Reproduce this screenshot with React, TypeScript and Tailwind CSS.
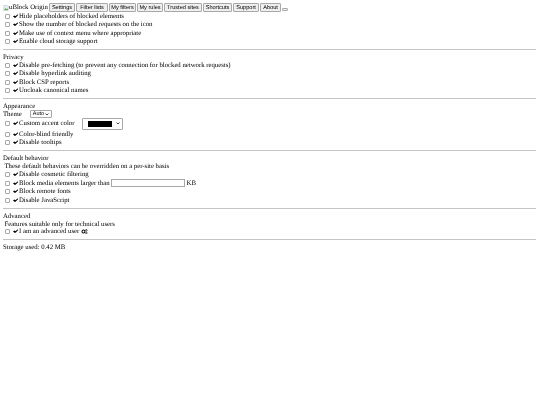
const tabs = [
  { label: "Settings", width: "w-[26px]" },
  { label: "Filter lists", width: "w-[32px]" },
  { label: "My filters", width: "w-[27px]" },
  { label: "My rules", width: "w-[26px]" },
  { label: "Trusted sites", width: "w-[38px]" },
  { label: "Shortcuts", width: "w-[29px]" },
  { label: "Support", width: "w-[26px]" },
  { label: "About", width: "w-[21px]" },
];

function Option({ label, children, className = "h-[8.5px]" }: { label: string; children?: React.ReactNode; className?: string }) {
  return (
    <div className={`flex items-center pl-[5px] ${className}`}>
      <span className="h-[5px] w-[5px] shrink-0 rounded-[1px] border-[0.5px] border-[#a8a8a8] bg-white" />
      <svg viewBox="0 0 12 8" className="mb-[1px] ml-[2.5px] mr-[1px] h-[4px] w-[5.5px] shrink-0">
        <path d="M0 4.5 L3.5 3 L5 4.5 L11 0 L12 1 L5.5 8 L3 8 Z" fill="#000" />
      </svg>
      <span className="whitespace-nowrap pt-[1px]">{label}</span>
      {children}
    </div>
  );
}

function Divider() {
  return <hr className="my-[3px] ml-[3px] mr-[4px] border-t border-[#c4c4c4]" />;
}

export default function App() {
  return (
    <div className="h-[405px] w-[540px] overflow-hidden bg-white pt-[3px] font-['Liberation_Serif',serif] text-[6.75px] leading-[8px] text-black blur-[0.25px] [text-rendering:geometricPrecision]">
      <div className="flex h-[9px] items-center pl-[3px]">
        <svg viewBox="0 0 16 16" className="h-[6px] w-[6px] shrink-0">
          <path d="M2 1h9l3 3v11H2z" fill="#e8eef7" stroke="#9aa0a6" />
          <path d="M3 13l4-5 3 3 2-2 2 4z" fill="#6aa84f" />
        </svg>
        <span className="w-[40px] whitespace-nowrap pt-[1px]">uBlock Origin</span>
        <div className="flex">
          {tabs.map((t) => (
            <span
              key={t.label}
              className={`mr-[1px] flex h-[8.5px] items-center justify-center whitespace-nowrap rounded-[1px] border-[0.5px] border-[#a8a8a8] bg-[#efefef] font-['Liberation_Sans',sans-serif] text-[5.6px] ${t.width}`}
            >
              {t.label}
            </span>
          ))}
          <span className="mt-[5px] h-[3px] w-[6px] rounded-[1px] border-[0.5px] border-[#a8a8a8] bg-[#efefef]" />
        </div>
      </div>

      <Option label="Hide placeholders of blocked elements" />
      <Option label="Show the number of blocked requests on the icon" />
      <Option label="Make use of context menu where appropriate" />
      <Option label="Enable cloud storage support" />
      <Divider />

      <div className="pl-[3px] pt-[1px] -mb-[1px]">Privacy</div>
      <Option label="Disable pre-fetching (to prevent any connection for blocked network requests)" />
      <Option label="Disable hyperlink auditing" />
      <Option label="Block CSP reports" />
      <Option label="Uncloak canonical names" />
      <Divider />

      <div className="pl-[3px] pt-[1px] -mb-[1px]">Appearance</div>
      <div className="flex h-[8px] items-center pl-[3px]">
        <span className="w-[27px] pt-[1px]">Theme</span>
        <span className="flex h-[7.5px] w-[22px] items-center justify-center rounded-[1px] border-[0.5px] border-[#a8a8a8] font-['Liberation_Sans',sans-serif] text-[5.5px]">
          Auto
          <svg viewBox="0 0 8 6" className="ml-[1px] h-[3px] w-[4px]">
            <path d="M1 1l3 3 3-3" fill="none" stroke="#111" strokeWidth="1.5" />
          </svg>
        </span>
      </div>
      <Option label="Custom accent color" className="h-[11.5px]">
        <span className="ml-[8px] flex h-[12px] w-[41px] items-center rounded-[1px] border-[0.5px] border-[#a8a8a8] pl-[4.5px]">
          <span className="h-[6px] w-[24px] bg-black" />
          <svg viewBox="0 0 8 6" className="ml-[4px] h-[3px] w-[4px]">
            <path d="M1 1l3 3 3-3" fill="none" stroke="#111" strokeWidth="1.5" />
          </svg>
        </span>
      </Option>
      <Option label="Color-blind friendly" className="h-[9px]" />
      <Option label="Disable tooltips" />
      <Divider />

      <div className="pl-[3px] pt-[1px] -mb-[1px]">Default behavior</div>
      <div className="pl-[4.5px] pt-[1px] -mb-[1px]">These default behaviors can be overridden on a per-site basis</div>
      <Option label="Disable cosmetic filtering" />
      <Option label="Block media elements larger than" className="h-[9px]">
        <span className="ml-[1px] h-[8px] w-[74px] border-[0.5px] border-[#a8a8a8] bg-white" />
        <span className="ml-[2px] pt-[1px]">KB</span>
      </Option>
      <Option label="Block remote fonts" />
      <Option label="Disable JavaScript" />
      <Divider />

      <div className="pl-[3px] pt-[1px] -mb-[1px]">Advanced</div>
      <div className="pl-[4.5px] pt-[1px] -mb-[1px]">Features suitable only for technical users</div>
      <Option label="I am an advanced user">
        <svg viewBox="0 0 16 12" className="mb-[1px] ml-[2px] h-[5px] w-[7px]">
          <circle cx="5.5" cy="6" r="3.5" fill="none" stroke="#111" strokeWidth="2.5" />
          <circle cx="12.5" cy="3" r="2" fill="none" stroke="#111" strokeWidth="1.6" />
          <circle cx="12.5" cy="9.5" r="2" fill="none" stroke="#111" strokeWidth="1.6" />
        </svg>
      </Option>
      <Divider />

      <div className="pl-[3px] pt-[1px]">Storage used: 0.42 MB</div>
    </div>
  );
}
